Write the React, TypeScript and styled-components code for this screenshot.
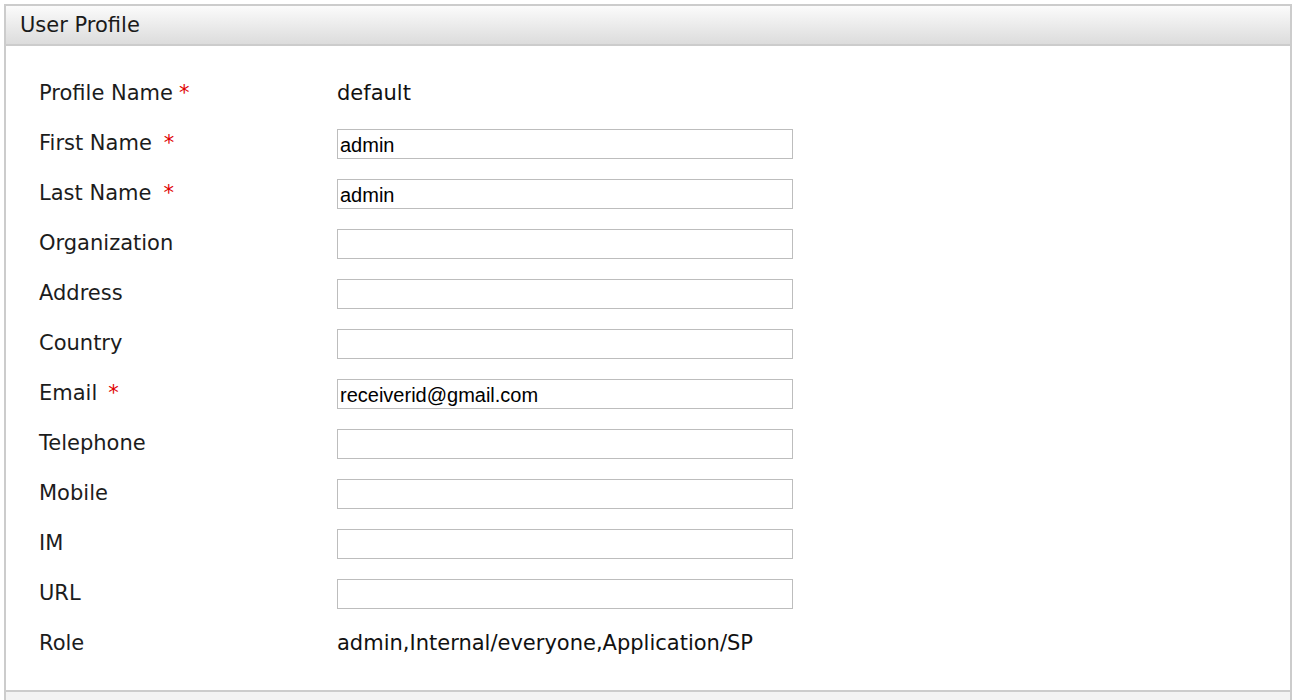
import React from "react";
import styled, { createGlobalStyle } from "styled-components";

const Global = createGlobalStyle`
  html, body { margin: 0; padding: 0; background: #fff; }
  body { font-family: "DejaVu Sans", Verdana, sans-serif; }
`;

const Page = styled.div`
  padding: 4px 6px 0 4px;
`;

const Panel = styled.section`
  border: 2px solid #cccccc;
  border-bottom: none;
  background: #fff;
`;

const Header = styled.header`
  height: 38px;
  display: flex;
  align-items: center;
  padding-left: 14px;
  background: linear-gradient(#fbfbfb, #dcdcdc);
  border-bottom: 2px solid #cccccc;
  font-size: 21px;
  color: #1a1a1a;
`;

const Body = styled.div`
  padding: 21px 0 23px 33px;
`;

const Row = styled.div`
  display: grid;
  grid-template-columns: 298px 1fr;
  align-items: center;
  height: 50px;
`;

const Label = styled.div`
  font-size: 21px;
  color: #1c1c1c;
  line-height: 1;
  padding-top: 2px;
`;

const Req = styled.span<{ $gap: number }>`
  color: #e00000;
  margin-left: ${(p) => p.$gap}px;
`;

const Value = styled.div`
  font-size: 21px;
  color: #111;
  line-height: 1;
  padding-top: 2px;
`;

const InputCell = styled.div`
  padding-top: 4px;
`;

const Input = styled.input`
  display: block;
  box-sizing: border-box;
  width: 456px;
  height: 30px;
  margin: 0;
  border: 1px solid #bdbdbd;
  padding: 2px 2px 0 2px;
  font-family: "Liberation Sans", Arial, sans-serif;
  font-size: 20px;
  color: #000;
  background: #fff;
  outline: none;
`;

const Footer = styled.div`
  height: 10px;
  border-top: 2px solid #cccccc;
  background: #f3f3f3;
`;

type Field = {
  label: string;
  req?: number;
  value?: string;
  text?: boolean;
};

const fields: Field[] = [
  { label: "Profile Name", req: 6, value: "default", text: true },
  { label: "First Name", req: 12, value: "admin" },
  { label: "Last Name", req: 12, value: "admin" },
  { label: "Organization", value: "" },
  { label: "Address", value: "" },
  { label: "Country", value: "" },
  { label: "Email", req: 11, value: "receiverid@gmail.com" },
  { label: "Telephone", value: "" },
  { label: "Mobile", value: "" },
  { label: "IM", value: "" },
  { label: "URL", value: "" },
  { label: "Role", value: "admin,Internal/everyone,Application/SP", text: true },
];

export default function App() {
  return (
    <>
      <Global />
      <Page>
        <Panel>
          <Header>User Profile</Header>
          <Body>
            {fields.map((f) => (
              <Row key={f.label}>
                <Label>
                  {f.label}
                  {f.req !== undefined && <Req $gap={f.req}>*</Req>}
                </Label>
                {f.text ? (
                  <Value>{f.value}</Value>
                ) : (
                  <InputCell>
                    <Input defaultValue={f.value} />
                  </InputCell>
                )}
              </Row>
            ))}
          </Body>
          <Footer />
        </Panel>
      </Page>
    </>
  );
}
